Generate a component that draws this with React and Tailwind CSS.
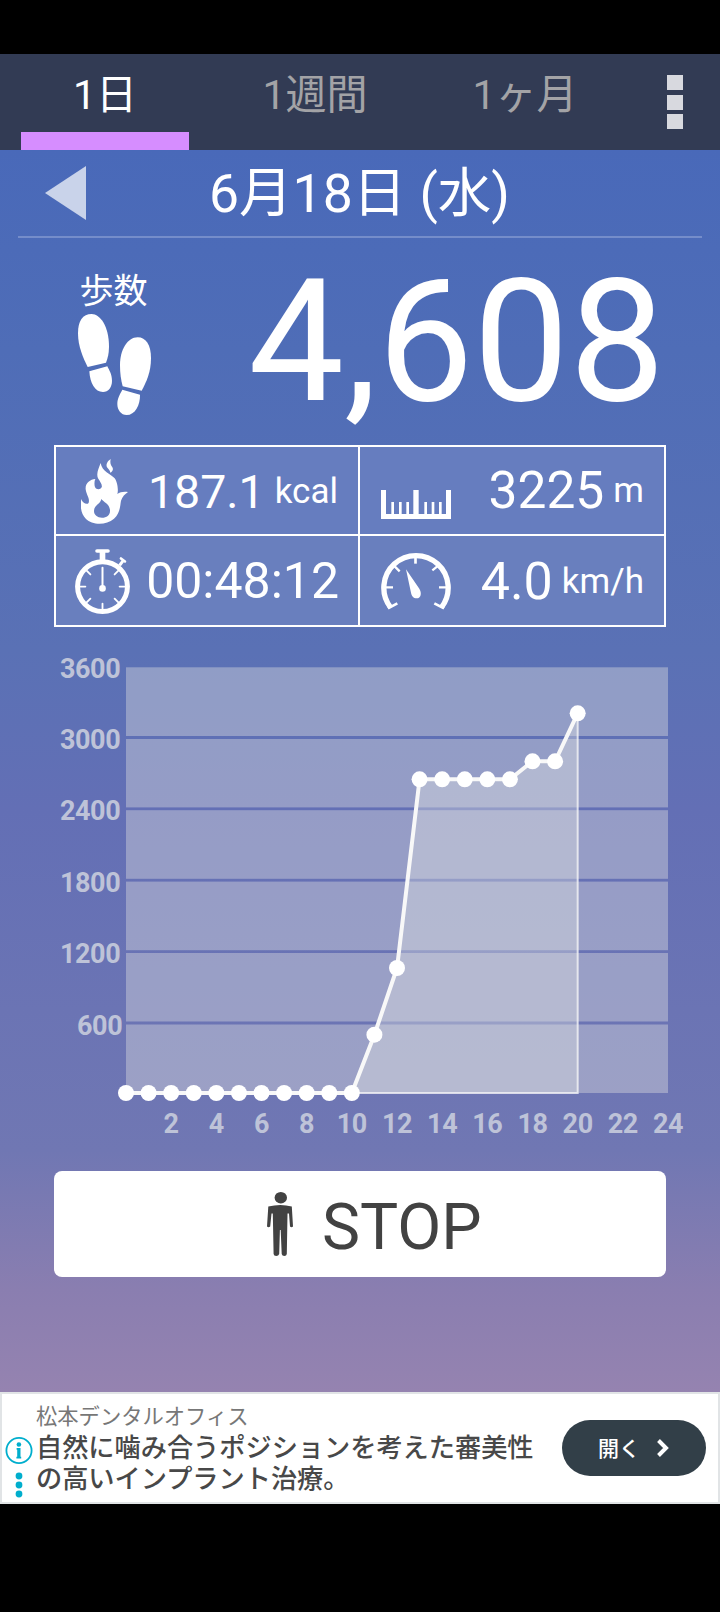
const TABS = ["1日", "1週間", "1ヶ月"];

// cumulative steps, one entry per hour
const POINTS = [
  1093, 1093, 1093, 1093, 1093, 1093, 1093, 1093, 1093, 1093, 1093,
  1034.7, 968, 779.3, 779.3, 779.3, 779.3, 779.3, 761.3, 761.3, 713.3,
];

const BANDS = [
  [667.3, 736],
  [739, 807.4],
  [810.2, 878.8],
  [881.6, 950.2],
  [953, 1021.5],
  [1024.5, 1093],
];

const Y_LABELS = [
  { text: "3600", y: 678, x: 120.3 },
  { text: "3000", y: 749, x: 120.3 },
  { text: "2400", y: 820, x: 120.3 },
  { text: "1800", y: 892, x: 120.3 },
  { text: "1200", y: 963, x: 120.3 },
  { text: "600", y: 1035, x: 122.3 },
];

const X_LABELS = [2, 4, 6, 8, 10, 12, 14, 16, 18, 20, 22, 24];

const hourX = (h) => 126 + (h * 542) / 24;

const FootprintsIcon = () => (
  <svg width="73" height="101" viewBox="114 192 219 303" fill="#fff">
    <path d="M155 192C180 192 207 228 207 290C207 310 203 325 198 338L143 351C130 325 114 290 114 250C114 212 128 192 155 192Z" />
    <path d="M148 364L202 349C207 360 216 372 216 392C216 412 205 426 189 426C165 426 150 400 148 364Z" />
    <path d="M293 262C318 262 333 285 333 325C333 365 320 395 305 422L248 409C243 390 240 370 240 345C240 300 262 262 293 262Z" />
    <path d="M247 419L300 434C301 465 285 495 260 495C243 495 232 480 232 462C232 445 240 432 247 419Z" />
  </svg>
);

const FlameIcon = () => (
  <svg width="47" height="65" viewBox="123 87 141 195" fill="#fff">
    <path
      fillRule="evenodd"
      d="M182 99C176 115 168 130 174 145C180 155 188 165 185 172C180 182 165 178 164 168C163 160 163 153 166 147C150 148 135 160 137 178C139 195 150 205 146 218C142 226 128 220 123 207C121 230 122 250 138 267C155 284 197 288 222 266C240 250 240 230 243 212C247 200 255 192 264 186C252 184 240 186 232 192C236 180 232 155 224 145C212 132 186 125 182 99ZM184 207C190 216 210 222 210 242C210 256 200 263 186 263C172 263 162 255 162 243C162 225 182 222 184 207Z"
    />
    <path d="M212 87C202 94 197 103 201 112C205 118 210 121 211 128C219 124 221 116 216 110C211 104 210 97 212 87Z" />
  </svg>
);

const StopwatchIcon = () => (
  <svg width="55" height="65" viewBox="105 356.5 165 195.5" fill="none" stroke="#fff">
    <circle cx="187.5" cy="469.5" r="75" strokeWidth="15" />
    <path d="M187.5 360V394" strokeWidth="17" />
    <path d="M171 362.5H204" strokeWidth="11" strokeLinecap="round" />
    <path d="M239 406L249 392" strokeWidth="9" />
    <path d="M243 385L255 394" strokeWidth="8" strokeLinecap="round" />
    {[45, 90, 135, 180, 225, 270, 315].map((a) => (
      <path key={a} d="M187.5 401V418" strokeWidth="5.5" strokeLinecap="round" transform={`rotate(${a} 187.5 469.5)`} />
    ))}
    <path d="M187.5 413V470" strokeWidth="6" strokeLinecap="round" />
    <circle cx="187.5" cy="475" r="10" fill="#fff" stroke="none" />
  </svg>
);

const RulerIcon = () => (
  <svg width="70" height="29" viewBox="0 0 210 87" fill="#fff">
    <path d="M0 0H15V72H97V0H113V72H195V0H210V87H0Z" />
    {[31, 54, 76, 130, 152, 174].map((x) => (
      <rect key={x} x={x} y="36" width="8" height="38" />
    ))}
  </svg>
);

const GaugeIcon = () => (
  <svg width="70" height="58" viewBox="93 365 210 174" fill="none" stroke="#fff">
    <path d="M121.5 531A96.5 96.5 0 1 1 274.5 531" strokeWidth="16" />
    <path d="M114 534L142 519M282 534L253 519" strokeWidth="8" />
    <path d="M196.5 378V400" strokeWidth="8" />
    <path d="M104 471H129M292 471H267M134 408L149 423M262 408L247 420" strokeWidth="7" />
    <path d="M168 417L208 475C216 488 213 504 200 504C190 504 185 497 183 487Z" fill="#fff" stroke="none" />
  </svg>
);

const PersonIcon = () => (
  <svg width="28" height="66" viewBox="266 1191 28 66" fill="#424242">
    <ellipse cx="280.8" cy="1197.7" rx="6.2" ry="5.8" />
    <path d="M268.3 1206.5Q280.5 1203.5 291.8 1206.5L293 1226.5Q291.5 1228 290 1226.5L289 1213.5H287.5L286.8 1254Q286.5 1256 284.3 1256Q282.1 1256 281.7 1254L280.7 1230H279.9L279.2 1254Q278.5 1256 276.2 1256Q273.8 1256 273.6 1254L272.8 1213.5H271.5L270.2 1226.5Q268.5 1228 267 1226.5Z" />
  </svg>
);

const Header = () => (
  <header className="flex h-24 bg-[#323b54]">
    {TABS.map((tab, i) => (
      <div key={tab} className="flex w-[210px] flex-col items-center justify-between pt-[21px]">
        <span className={`text-[41px] leading-none ${i === 0 ? "text-white" : "text-[#a3a3a6]"}`}>{tab}</span>
        {i === 0 && <div className="h-[18px] w-[168px] bg-[#d68dff]" />}
      </div>
    ))}
    <div className="ml-[37px] flex flex-col gap-[4.5px] pt-[21px]">
      <div className="h-[15px] w-4 bg-[#d8d9df]" />
      <div className="h-[15px] w-4 bg-[#d8d9df]" />
      <div className="h-[15px] w-4 bg-[#d8d9df]" />
    </div>
  </header>
);

const DateBar = () => (
  <div className="mx-[18px] flex h-[88px] border-b-2 border-[#758dca]">
    <svg className="mt-4 ml-[27px]" width="41" height="54" viewBox="0 0 41 54">
      <path d="M0 27L41 0V54Z" fill="#c9d3ea" />
    </svg>
    <h1 className="mt-[17px] mr-[69px] flex-1 text-center text-[53.5px] leading-none">6月18日 (水)</h1>
  </div>
);

const StepCount = () => (
  <div className="flex h-[207px] justify-between pr-[55px] pl-[78px]">
    <div className="flex w-[73px] flex-col items-center pt-[36px]">
      <span className="mr-[2px] text-[34px] leading-none whitespace-nowrap">歩数</span>
      <div className="mt-[6px]">
        <FootprintsIcon />
      </div>
    </div>
    <span className="mt-[18.5px] text-[170.5px] leading-none">4,608</span>
  </div>
);

const Stats = () => (
  <div className="mx-[54px] grid h-[182px] grid-cols-[302px_304px] grid-rows-[87px_89px] gap-[2px] border-2 border-white bg-white">
    <div className="flex items-start justify-between bg-[#667dbf] pr-[20px] pl-[25px]">
      <div className="mt-[12px]"><FlameIcon /></div>
      <div className="flex">
        <span className="mt-[22px] text-[46.5px] leading-none">187.1</span>
        <span className="mt-[27px] ml-[10px] text-[35px] leading-none">kcal</span>
      </div>
    </div>
    <div className="flex items-start justify-between bg-[#667dbf] pr-[20px] pl-[21px]">
      <div className="mt-[43px]"><RulerIcon /></div>
      <div className="flex">
        <span className="mt-[18px] text-[51.5px] leading-none">3225</span>
        <span className="mt-[26px] ml-[9px] text-[35px] leading-none">m</span>
      </div>
    </div>
    <div className="flex items-start justify-between bg-[#697fbe] pr-[19px] pl-[19px]">
      <div className="mt-[13px]"><StopwatchIcon /></div>
      <span className="mt-[20px] text-[50px] leading-none">00:48:12</span>
    </div>
    <div className="flex items-start justify-between bg-[#697fbe] pr-[20px] pl-[21px]">
      <div className="mt-[16px]"><GaugeIcon /></div>
      <div className="flex">
        <span className="mt-[20px] text-[52px] leading-none">4.0</span>
        <span className="mt-[28px] ml-[9px] text-[35px] leading-none">km/h</span>
      </div>
    </div>
  </div>
);

const Chart = () => {
  const line = POINTS.map((y, h) => `${hourX(h)},${y}`).join(" ");
  return (
    <svg className="block" width="720" height="544" viewBox="0 627 720 544">
      {BANDS.map(([top, bottom]) => (
        <rect key={top} x="126" y={top} width="542" height={bottom - top} fill="#e2e2e2" fillOpacity="0.4" />
      ))}
      <polygon points={`${line} ${hourX(20)},1093`} fill="#e2e4e4" fillOpacity="0.38" />
      <path d={`M${hourX(20)} 713V1093H${hourX(10)}`} fill="none" stroke="#f4f4f6" strokeOpacity="0.8" strokeWidth="2" />
      <polyline points={line} fill="none" stroke="#f8f8f8" strokeWidth="4" />
      {POINTS.map((y, h) => (
        <circle key={h} cx={hourX(h)} cy={y} r="8" fill="#fff" />
      ))}
      <g fill="#bec3d8" fontSize="27" fontWeight="700" letterSpacing="-0.4">
        {Y_LABELS.map((l) => (
          <text key={l.text} x={l.x} y={l.y} textAnchor="end">{l.text}</text>
        ))}
        {X_LABELS.map((h) => (
          <text key={h} x={hourX(h)} y="1133" textAnchor="middle">{h}</text>
        ))}
      </g>
    </svg>
  );
};

const StopButton = () => (
  <button className="mx-[54px] flex h-[106px] w-[612px] rounded-lg bg-white pl-[212px] text-[#424242]">
    <div className="mt-5"><PersonIcon /></div>
    <span className="mt-[25px] ml-[28px] text-[64px] leading-none">STOP</span>
  </button>
);

const AdBanner = () => (
  <div className="flex h-28 border-2 border-[#e1e4e6] bg-white">
    <svg className="mt-[42px] ml-[3px] shrink-0" width="28" height="64" viewBox="0 0 28 64" fill="#00aecd">
      <circle cx="14" cy="14.5" r="12.6" fill="none" stroke="#00aecd" strokeWidth="1.8" />
      <circle cx="13.9" cy="8.5" r="2.3" />
      <path d="M11.6 12H15.5V20.8H16.2V22.6H11.4V20.8H12.2V13.8H11.6Z" />
      <circle cx="14" cy="40" r="3.4" />
      <circle cx="14" cy="49" r="3.4" />
      <circle cx="14" cy="58" r="3.4" />
    </svg>
    <div className="ml-[3px] w-[526px] pt-[10px] whitespace-nowrap">
      <p className="text-[21.3px] leading-[25px] text-[#777]">松本デンタルオフィス</p>
      <p className="mt-1 text-[26.2px] leading-[31px] font-medium text-[#484848]">
        自然に噛み合うポジションを考えた審美性
        <br />
        の高いインプラント治療。
      </p>
    </div>
    <button className="mt-[26px] flex h-14 w-36 shrink-0 items-center rounded-full bg-[#323f48] pl-[36px] text-[21px] font-medium text-white">
      <span className="pt-[4px]">開く</span>
      <svg className="ml-[16px]" width="14" height="20" viewBox="0 0 14 20">
        <path d="M2.5 2.5L10 10L2.5 17.5" fill="none" stroke="#fff" strokeWidth="4" />
      </svg>
    </button>
  </div>
);

export default function App() {
  return (
    <div className="flex h-[1612px] w-[720px] flex-col bg-black pt-[54px] font-['Roboto','Noto_Sans_CJK_JP',sans-serif] text-white">
      <Header />
      <main className="h-[1242px] bg-[linear-gradient(to_bottom,#4969b9_0px,#4f6db7_200px,#5a71b5_500px,#636fb5_660px,#6b74b4_860px,#7077b3_1000px,#8a7eb0_1140px,#9583b0_1242px)]">
        <DateBar />
        <StepCount />
        <Stats />
        <Chart />
        <StopButton />
      </main>
      <AdBanner />
    </div>
  );
}
